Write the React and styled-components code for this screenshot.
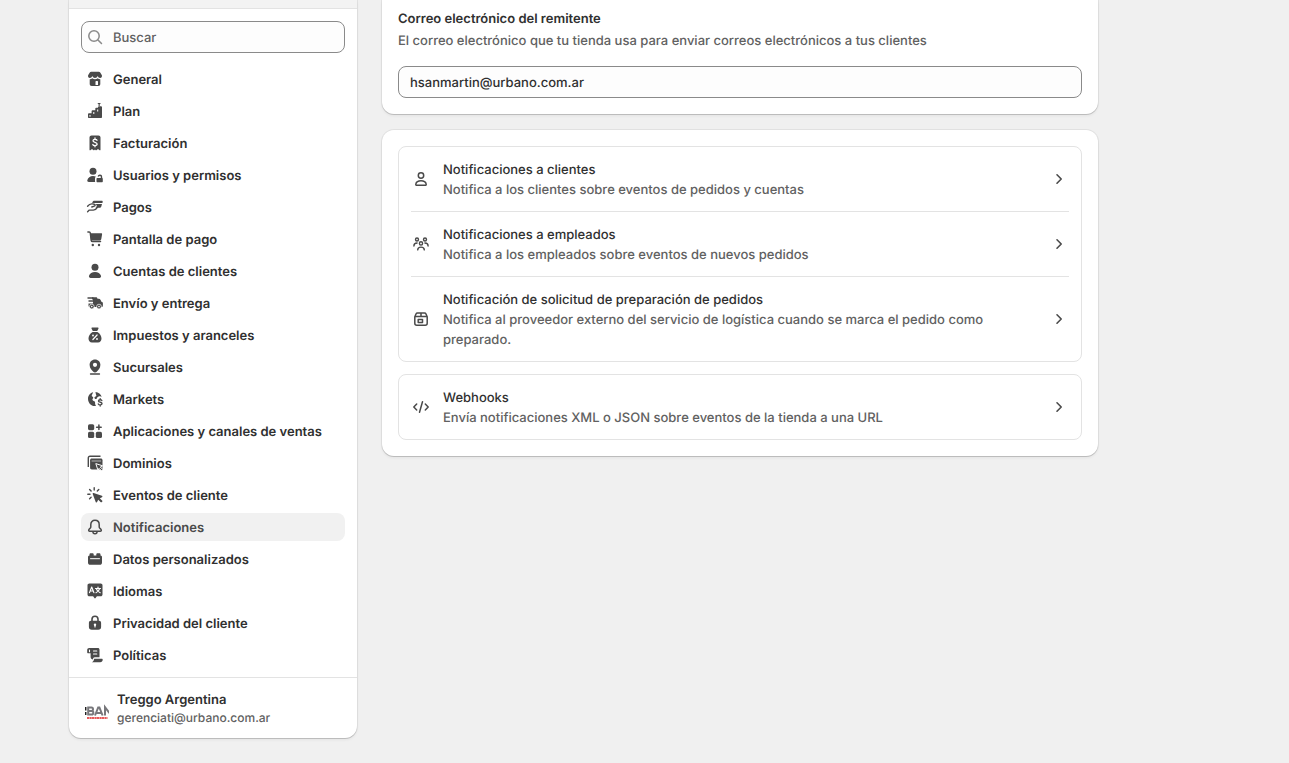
import React from "react";
import styled, { createGlobalStyle } from "styled-components";

const GlobalStyle = createGlobalStyle`
  *, *::before, *::after { box-sizing: border-box; }
  body {
    margin: 0;
    background: #f0f0f0;
    color: #303030;
    font-family: "Inter", "Liberation Sans", sans-serif;
    font-size: 13px;
    line-height: 20px;
    font-weight: 500;
    text-rendering: geometricPrecision;
  }
  h2, p, ul { margin: 0; padding: 0; }
  ul { list-style: none; }
`;

const bevel = `
  box-shadow:
    0 1px 0 rgba(26, 26, 26, 0.14),
    0 0 0 1px rgba(0, 0, 0, 0.06),
    0 2px 3px rgba(26, 26, 26, 0.06);
`;

const Page = styled.div`
  display: flex;
  align-items: flex-start;
  gap: 25px;
  max-width: 1151px;
  margin: 0 auto;
  padding-bottom: 24px;
`;

const Sidebar = styled.aside`
  flex: 0 0 288px;
  background: #fff;
  border-radius: 0 0 12px 12px;
  ${bevel}
`;

const SidebarHeader = styled.div`
  height: 9px;
  background: #f3f3f3;
  border-bottom: 1px solid #e3e3e3;
`;

const SidebarBody = styled.div`
  display: flex;
  flex-direction: column;
  gap: 12px;
  padding: 12px 12px 8px;
`;

const TextInput = styled.input`
  width: 100%;
  height: 32px;
  padding: 2px 11px 0;
  padding-left: ${(p) => (p.$withIcon ? "31px" : "11px")};
  border: 1px solid #8a8a8a;
  border-radius: 8px;
  background: #fdfdfd;
  color: #303030;
  font: inherit;
  text-rendering: inherit;
  display: block;
  &::placeholder { color: #616161; opacity: 1; }
`;

const SearchField = styled.label`
  position: relative;
  display: block;
`;

const SearchIcon = styled.span`
  position: absolute;
  left: 4px;
  top: 6px;
  width: 20px;
  height: 20px;
`;

const NavList = styled.ul`
  display: flex;
  flex-direction: column;
  gap: 4px;
`;

const NavLink = styled.a`
  display: flex;
  align-items: center;
  gap: 8px;
  min-height: 28px;
  padding: 0 4px;
  border-radius: 8px;
  text-decoration: none;
  font-weight: 600;
  color: ${(p) => (p.$active ? "#4a4a4a" : "#303030")};
  background: ${(p) => (p.$active ? "#f1f1f1" : "transparent")};
`;

const NavLabel = styled.span`
  padding-top: 2px;
`;

const Svg = styled.svg`
  display: block;
  flex: none;
  width: 20px;
  height: 20px;
  color: ${(p) => p.$tone || "#4a4a4a"};
`;

const Account = styled.a`
  display: flex;
  align-items: center;
  gap: 8px;
  padding: 12px 16px;
  border-top: 1px solid #e3e3e3;
  color: inherit;
  text-decoration: none;
`;

const LogoSvg = styled.svg`
  display: block;
  flex: none;
  width: 24px;
  height: 24px;
`;

const AccountText = styled.span`
  display: flex;
  flex-direction: column;
`;

const AccountName = styled.span`
  font-weight: 600;
`;

const AccountMail = styled.span`
  font-size: 12px;
  line-height: 16px;
  color: #616161;
`;

const Main = styled.main`
  flex: 1 1 0;
  min-width: 0;
  max-width: 716px;
  display: flex;
  flex-direction: column;
  gap: 16px;
`;

const Card = styled.section`
  padding: ${(p) => (p.$first ? "9px 16px 16px" : "16px")};
  background: #fff;
  border-radius: ${(p) => (p.$first ? "0 0 12px 12px" : "12px")};
  display: flex;
  flex-direction: column;
  gap: ${(p) => (p.$first ? "15px" : "12px")};
  ${bevel}
`;

const CardHead = styled.div`
  display: flex;
  flex-direction: column;
  gap: 2px;
`;

const CardTitle = styled.h2`
  font-size: 13px;
  line-height: 20px;
  font-weight: 600;
`;

const Muted = styled.p`
  color: #616161;
`;

const LinkGroup = styled.ul`
  border: 1px solid #e3e3e3;
  border-radius: 8px;
  padding: 0 12px;
`;

const LinkItem = styled.li`
  & + & { border-top: 1px solid #e3e3e3; }
`;

const LinkRow = styled.a`
  display: flex;
  align-items: center;
  gap: 12px;
  padding: 11px 0;
  color: inherit;
  text-decoration: none;
`;

const LinkText = styled.div`
  flex: 1;
  min-width: 0;
  padding-top: 2px;
`;

const LinkTitle = styled.p`
  font-weight: 500;
`;

const line = {
  fill: "none",
  stroke: "currentColor",
  strokeWidth: 1.5,
  strokeLinecap: "round",
  strokeLinejoin: "round",
};
const cut = { fill: "none", stroke: "#fff", strokeWidth: 1.2, strokeLinecap: "round", strokeLinejoin: "round" };

const icons = {
  search: (
    <g {...line}>
      <circle cx="9" cy="9" r="5.2" />
      <path d="M13 13l3.500 3.500" />
    </g>
  ),
  store: (
    <g>
      <path d="M6.200 2.700h7.600c.6 0 1.100.3 1.400.8L16.900 6.300c.4 1.500-.5 2.700-1.800 2.700-1.200 0-1.900-.8-2.400-2-.5 1.200-1.500 2-2.700 2s-2.200-.8-2.700-2c-.5 1.200-1.200 2-2.400 2-1.300 0-2.200-1.200-1.800-2.700l1.700-2.800c.3-.5.800-.8 1.400-.8z" />
      <path fillRule="evenodd" d="M4.700 10.300c1.100 0 1.900-.4 2.600-1 .8.700 1.700 1 2.700 1s1.900-.3 2.700-1c.7.6 1.500 1 2.600 1v4.700c0 1.300-.7 2-2 2H6.700c-1.300 0-2-.7-2-2zM10.500 12.700v3.300h2.500v-3.300c0-.4-.2-.6-.6-.6h-1.300c-.4 0-.6.2-.6.6z" />
    </g>
  ),
  plan: (
    <g>
      <path fillRule="evenodd" d="M3 13.200c0-.5.400-.9.900-.9h2.700v-2.100c0-.5.400-.9.900-.9h2.800V7.600c0-.5.400-.9.900-.9h1.700c.2-1 .6-1.400 1.300-1.400h1.900c.5 0 .9.400.9.900V16c0 .6-.4 1-1 1H4c-.6 0-1-.4-1-1zM4.500 14v1.700h1V14zM8.300 11v1.900h1V11zM12.200 8.500v1.900h1V8.500z" />
      <path d="M12.300 2H16l-1.300 1.300V5h-1.100V3.300z" />
    </g>
  ),
  bill: (
    <g>
      <path d="M6.500 2.500h7c1.100 0 2 .9 2 2v12.300c0 .5-.5.700-.9.400L13 16l-1.600 1.200c-.2.200-.5.200-.7 0L10 16.500l-.8.7c-.2.200-.5.200-.7 0L7 16l-1.600 1.200c-.4.300-.9.100-.9-.4V4.500c0-1.100.9-2 2-2z" />
      <path {...cut} strokeWidth="1.300" d="M12 7.300c-.2-.7-.8-1-2-1s-2 .4-2 1.500c0 1 .8 1.300 2 1.600s2.100.6 2.100 1.700-1 1.500-2.100 1.500-2-.4-2.200-1.100M10 5v1.200M10 12.600v1.200" />
    </g>
  ),
  users: (
    <g>
      <circle cx="8" cy="6.300" r="3.500" />
      <path d="M8 11c1 0 2 .2 2.800.6-.5.500-.8 1.200-.8 2V16c0 .4.100.7.200 1H3.800c-1 0-1.700-.8-1.500-1.700C2.900 12.800 5.200 11 8 11z" />
      <path d="M12.500 13h4.300c.6 0 1 .4 1 1v2.200c0 .6-.4 1-1 1h-4.300c-.6 0-1-.4-1-1V14c0-.6.400-1 1-1z" />
      <path {...line} strokeWidth="1.400" strokeLinecap="butt" d="M16.500 13.500v-1.700c0-1.900-2.800-2-3.300-.3" />
    </g>
  ),
  pay: (
    <g>
      <path d="M7.500 5c.4-.8 1-1.300 2-1.300h7.200c.8 0 1.200.6 1 1.300l-.3.900H7.200zM10 7.100h7l-.7 2.300c-.3.900-.9 1.300-1.800 1.300h-4c1-.7 1.600-1.600 1-2.600-.3-.5-.8-.8-1.500-1z" />
      <path {...line} strokeWidth="1.400" d="M2.600 9.200C4 7.400 5.500 6.700 7.300 6.900l2.100.4c1 .3.900 1.500-.1 1.800l-2.500.9M2.600 14.700l1.700-1.600h4c2.500 0 3.300-1.400 4-2.700" />
    </g>
  ),
  cart: (
    <g>
      <path {...line} d="M2.900 3h1.300c.6 0 1 .4 1.100 1l.9 7.300c.1.900.7 1.300 1.500 1.300h7.800" />
      <path d="M5.200 4.300h11.100c.5 0 .9.400.8.900l-.8 4.800c-.1.900-.8 1.500-1.700 1.500H6z" />
      <circle cx="7.800" cy="16" r="1.200" />
      <circle cx="14" cy="16" r="1.200" />
    </g>
  ),
  person: (
    <g>
      <circle cx="10" cy="6.200" r="3.500" />
      <path d="M10 11c3 0 5.300 1.500 6 3.800.4 1.200-.5 2.200-1.700 2.200H5.700c-1.200 0-2.100-1-1.700-2.200C4.700 12.500 7 11 10 11z" />
    </g>
  ),
  truck: (
    <g>
      <path d="M7 4.300h4c.9 0 1.500.6 1.500 1.500h1.200c.9 0 1.500.4 1.900 1.200l.8 1.700c1 .2 1.500.8 1.500 1.700v2c0 1-.6 1.500-1.500 1.500H4.700c-.7 0-1.200-.5-1.200-1.200v-2.300H8V6.500H7z" />
      <path {...line} strokeWidth="1.400" d="M3 5h5M4 8h4" />
      <circle cx="6.800" cy="13.600" r="2.400" stroke="#fff" strokeWidth=".7" />
      <circle cx="14" cy="13.600" r="2.400" stroke="#fff" strokeWidth=".7" />
      <circle cx="6.800" cy="13.600" r=".8" fill="#fff" />
      <circle cx="14" cy="13.600" r=".8" fill="#fff" />
    </g>
  ),
  tax: (
    <g>
      <path d="M7.300 2.500h5.400c.7 0 1.100.7.700 1.300L12.200 6H7.800L6.600 3.800c-.4-.6 0-1.300.7-1.300zM7.600 7h4.800c2.700 1.600 4.100 4 4.100 6.600 0 2.400-1.300 3.900-3.500 3.900H7c-2.200 0-3.500-1.500-3.500-3.900C3.500 11 4.900 8.600 7.600 7z" />
      <path {...cut} d="M7.900 14.500l4.200-4.500" />
      <circle cx="8" cy="10.500" r=".9" fill="#fff" />
      <circle cx="12" cy="14" r=".9" fill="#fff" />
    </g>
  ),
  pin: (
    <g>
      <path fillRule="evenodd" d="M10 2.500c3.100 0 5.400 2.300 5.400 5.300 0 3.500-2.300 5.700-3.700 6.900-1 .9-2.400.9-3.400 0-1.400-1.200-3.700-3.400-3.700-6.900 0-3 2.300-5.300 5.400-5.300zm0 3.200a2.100 2.100 0 100 4.200 2.100 2.100 0 000-4.200z" />
      <path {...line} strokeWidth="1.300" d="M5.500 17h9" />
    </g>
  ),
  markets: (
    <g>
      <path d="M8.200 3.200C5.200 3.700 3 6.500 3 9.700 3 13.700 5.900 17 9.700 17h.8c.4 0 .5-.3.300-.6-.7-.9-.9-1.800-.7-2.600.1-.7-.2-1.200-.8-1.500l-1.100-.5c-.8-.4-1-1.300-.5-2l.4-.5c.3-.4.2-1-.2-1.300l-.6-.4c-.6-.5-.7-1.200-.3-1.800z" />
      <path d="M10.500 3c3 .2 5.400 2.100 6.200 4.800-1-.7-2.400-.7-3.500-.1-1.100.5-1.600 1.500-1.600 2.400-.9.100-1.900-.3-2.100-1.200-.2-.7.400-1.400 1.100-1.500.6-.1.900-.6.700-1.100l-.3-.7c-.3-.8-.4-1.700-.5-2.600z" />
      <path {...line} strokeWidth="1.400" d="M16.800 11.500c-.3-.6-.8-.8-1.600-.8-1 0-1.700.4-1.700 1.200s.7 1 1.700 1.300 1.800.5 1.800 1.400-.8 1.300-1.800 1.300-1.600-.3-1.900-.9M15.200 9.600v1M15.200 16v1" />
    </g>
  ),
  apps: (
    <g>
      <rect x="3" y="3.200" width="6.200" height="6" rx="1.600" />
      <rect x="3" y="10.800" width="6.200" height="6.200" rx="1.600" />
      <rect x="10.800" y="10.800" width="6.200" height="6.200" rx="1.600" />
      <path {...line} d="M13.900 3.900v4.600M11.600 6.200h4.600" />
    </g>
  ),
  domains: (
    <g>
      <path {...line} strokeWidth="1.400" strokeLinecap="butt" d="M3.300 14V5c0-1.100.6-1.700 1.700-1.700h10.500" />
      <path d="M6.800 5.500h9c1 0 1.700.7 1.700 1.700v9.300H6.800c-1 0-1.700-.7-1.700-1.700V7.200c0-1 .7-1.700 1.700-1.700z" />
      <path {...cut} strokeWidth=".6" d="M7 8h8.700" />
      <path stroke="#fff" strokeWidth="1" d="M10.800 10.600l6.800 2.200-2.300 1.200 2.500 2.500-1.300 1.300-2.500-2.500-1 2.100z" />
    </g>
  ),
  events: (
    <g>
      <path d="M8.600 8l8.300 2.800c.7.200.7 1.100.1 1.400l-2.200 1 2.500 2.500c.6.600-.9 2.100-1.500 1.500l-2.600-2.500-1.100 2.300c-.3.600-1.200.6-1.400-.1L7.700 9c-.2-.6.3-1.200.9-1z" />
      <path {...line} strokeWidth="1.400" d="M9.200 2.800v2.300M4.600 4.500l1.500 1.600M13.800 4.500l-1.500 1.600M2.800 9.200H5M4.600 13.700l1.500-1.500" />
    </g>
  ),
  bell: (
    <path {...line} d="M10 3.200c-2.600 0-4.200 1.900-4.200 4.300v2.200c0 .5-.2.900-.5 1.300l-1.400 1.600c-.5.800-.1 1.700.8 1.700h10.600c.9 0 1.300-.9.800-1.700L14.700 11c-.3-.4-.5-.8-.5-1.300V7.500c0-2.400-1.600-4.300-4.200-4.300zM7.900 14.500c0 3 4.200 3 4.200 0" />
  ),
  data: (
    <g>
      <path d="M4.500 6.500v-.9c0-.9.500-1.400 1.400-1.400h1.400c.9 0 1.400.5 1.400 1.400v.9h2.600v-.9c0-.9.500-1.400 1.400-1.400h1.400c.9 0 1.400.5 1.400 1.400v.9c1 .1 1.500.7 1.500 1.700v5.300c0 1.500-.8 2.300-2.300 2.300H5.300C3.800 15.800 3 15 3 13.500V8.200c0-1 .5-1.600 1.500-1.700z" />
      <path {...cut} strokeWidth="1" d="M5.500 9.700h9" />
    </g>
  ),
  languages: (
    <g>
      <path d="M4.300 2.500h11.400c1 0 1.800.8 1.800 1.800v9.100c0 1-.8 1.800-1.800 1.800h-3.800l-1.300 1.900c-.3.400-.9.400-1.200 0l-1.300-1.900H4.300c-1 0-1.800-.8-1.800-1.800V4.300c0-1 .8-1.800 1.800-1.800z" />
      <path {...cut} strokeWidth="1.200" d="M4.500 11.600L6.700 6l2.200 5.600M5.300 10h2.800M10.500 7.500h5M13 6v1.500M14.600 7.700c-.5 1.900-1.800 3.300-3.600 4M11.300 7.700c.5 1.900 1.900 3.300 3.900 4" />
    </g>
  ),
  lock: (
    <g>
      <path {...line} strokeWidth="1.600" d="M7 9V6.300C7 2.200 13 2.200 13 6.300V9" />
      <path d="M5.800 7.800h8.400c1.100 0 1.900.8 1.900 1.900v4.200c0 1.700-1.100 2.800-2.800 2.800H6.700c-1.700 0-2.800-1.100-2.800-2.800V9.700c0-1.100.8-1.900 1.900-1.900z" />
      <circle cx="10" cy="11.700" r="1.200" fill="#fff" />
      <path {...cut} d="M10 12v2" />
    </g>
  ),
  policy: (
    <g>
      <path d="M4.200 3h8.600c1 0 1.700.7 1.700 1.700v7.600H9.800c-1.100 0-1.700.7-1.700 1.700v.6c-1.500-.1-2.500-1.100-2.500-2.600V8.300H3.200c-.7 0-1-.4-1-1V5c0-1.200.8-2 2-2z" />
      <path d="M9.200 13.700h7.500c.6 0 1 .4 1 1 0 1.500-1 2.500-2.500 2.500H6.800c1.400-.6 2-1.800 2.400-3.500z" />
      <path {...cut} strokeWidth="1.100" d="M8.500 6h3.300M8.500 9h3.300M4.500 5v1.800" />
    </g>
  ),
  personLine: (
    <g {...line}>
      <circle cx="10" cy="6.500" r="2.700" />
      <path d="M10 11.800c2.700 0 4.700 1.200 5.200 3.200.2.700-.3 1.300-1 1.300H5.800c-.7 0-1.200-.6-1-1.300.5-2 2.500-3.200 5.200-3.200z" />
    </g>
  ),
  team: (
    <g {...line} strokeWidth="1.400">
      <circle cx="6" cy="5.500" r="1.500" />
      <circle cx="14" cy="5.500" r="1.500" />
      <circle cx="10" cy="9.400" r="1.600" />
      <path d="M2.900 12c0-1.900 1-3 3.200-3M17.100 12c0-1.900-1-3-3.200-3M6.700 15.900c0-1.800 1.300-2.800 3.300-2.800s3.300 1 3.300 2.800" />
    </g>
  ),
  box: (
    <g {...line}>
      <path d="M3.800 7.700L5 5c.3-.7.800-1 1.500-1h7c.7 0 1.200.3 1.500 1l1.200 2.700v6.500c0 1.200-.8 2-2 2H5.800c-1.200 0-2-.8-2-2zM4 7.600h12M10 4.200v3" />
      <path d="M7.200 10.400h4.300v3H7.200z" />
    </g>
  ),
  code: <path {...line} d="M5.700 7L2.800 10l2.900 3M14.300 7l2.900 3-2.900 3M11.500 4.800l-3 10.400" />,
  chevron: <path {...line} strokeWidth="1.600" d="M8 5.800l4.200 4.200L8 14.200" />,
};

function Icon({ name, tone }) {
  return (
    <Svg viewBox="0 0 20 20" fill="currentColor" aria-hidden="true" $tone={tone}>
      {icons[name]}
    </Svg>
  );
}

function ShopLogo() {
  return (
    <LogoSvg viewBox="0 0 24 24" aria-hidden="true">
      <g fill="none" stroke="#77777b" strokeWidth="2">
        <path stroke="#222" strokeWidth="1.500" d="M.7 11v3.500M.7 16v3" />
        <path d="M3.200 11.500H6.500c2 0 2 3.400 0 3.400H3.200h3.500c2.200 0 2.200 3.600 0 3.600H3.200z" />
        <path d="M10 19.500l3.200-8h1.200l3.200 8M11.500 17h4.500" />
        <path d="M20 19.500v-8.300l4.500 6" />
      </g>
      <path d="M2 22h20.500" stroke="#e65a5a" strokeWidth="2" strokeDasharray="2.500 .4 1.800 .3" />
    </LogoSvg>
  );
}

const navItems = [
  ["General", "store"],
  ["Plan", "plan"],
  ["Facturación", "bill"],
  ["Usuarios y permisos", "users"],
  ["Pagos", "pay"],
  ["Pantalla de pago", "cart"],
  ["Cuentas de clientes", "person"],
  ["Envío y entrega", "truck"],
  ["Impuestos y aranceles", "tax"],
  ["Sucursales", "pin"],
  ["Markets", "markets"],
  ["Aplicaciones y canales de ventas", "apps"],
  ["Dominios", "domains"],
  ["Eventos de cliente", "events"],
  ["Notificaciones", "bell"],
  ["Datos personalizados", "data"],
  ["Idiomas", "languages"],
  ["Privacidad del cliente", "lock"],
  ["Políticas", "policy"],
];

const groups = [
  [
    ["personLine", "Notificaciones a clientes", "Notifica a los clientes sobre eventos de pedidos y cuentas"],
    ["team", "Notificaciones a empleados", "Notifica a los empleados sobre eventos de nuevos pedidos"],
    [
      "box",
      "Notificación de solicitud de preparación de pedidos",
      "Notifica al proveedor externo del servicio de logística cuando se marca el pedido como preparado.",
    ],
  ],
  [["code", "Webhooks", "Envía notificaciones XML o JSON sobre eventos de la tienda a una URL"]],
];

export default function App() {
  return (
    <>
      <GlobalStyle />
      <Page>
        <Sidebar>
          <SidebarHeader />
          <SidebarBody>
            <SearchField>
              <SearchIcon>
                <Icon name="search" tone="#8a8a8a" />
              </SearchIcon>
              <TextInput type="search" placeholder="Buscar" aria-label="Buscar" $withIcon />
            </SearchField>
            <nav>
              <NavList>
                {navItems.map(([label, icon]) => {
                  const active = label === "Notificaciones";
                  return (
                    <li key={label}>
                      <NavLink href="#" $active={active} aria-current={active ? "page" : undefined}>
                        <Icon name={icon} />
                        <NavLabel>{label}</NavLabel>
                      </NavLink>
                    </li>
                  );
                })}
              </NavList>
            </nav>
          </SidebarBody>
          <Account href="#">
            <ShopLogo />
            <AccountText>
              <AccountName>Treggo Argentina</AccountName>
              <AccountMail>gerenciati@urbano.com.ar</AccountMail>
            </AccountText>
          </Account>
        </Sidebar>
        <Main>
          <Card $first>
            <CardHead>
              <CardTitle id="sender-title">Correo electrónico del remitente</CardTitle>
              <Muted>El correo electrónico que tu tienda usa para enviar correos electrónicos a tus clientes</Muted>
            </CardHead>
            <TextInput type="email" defaultValue="hsanmartin@urbano.com.ar" aria-labelledby="sender-title" />
          </Card>
          <Card>
            {groups.map((rows) => (
              <LinkGroup key={rows[0][1]}>
                {rows.map(([icon, title, text]) => (
                  <LinkItem key={title}>
                    <LinkRow href="#">
                      <Icon name={icon} />
                      <LinkText>
                        <LinkTitle>{title}</LinkTitle>
                        <Muted>{text}</Muted>
                      </LinkText>
                      <Icon name="chevron" />
                    </LinkRow>
                  </LinkItem>
                ))}
              </LinkGroup>
            ))}
          </Card>
        </Main>
      </Page>
    </>
  );
}
